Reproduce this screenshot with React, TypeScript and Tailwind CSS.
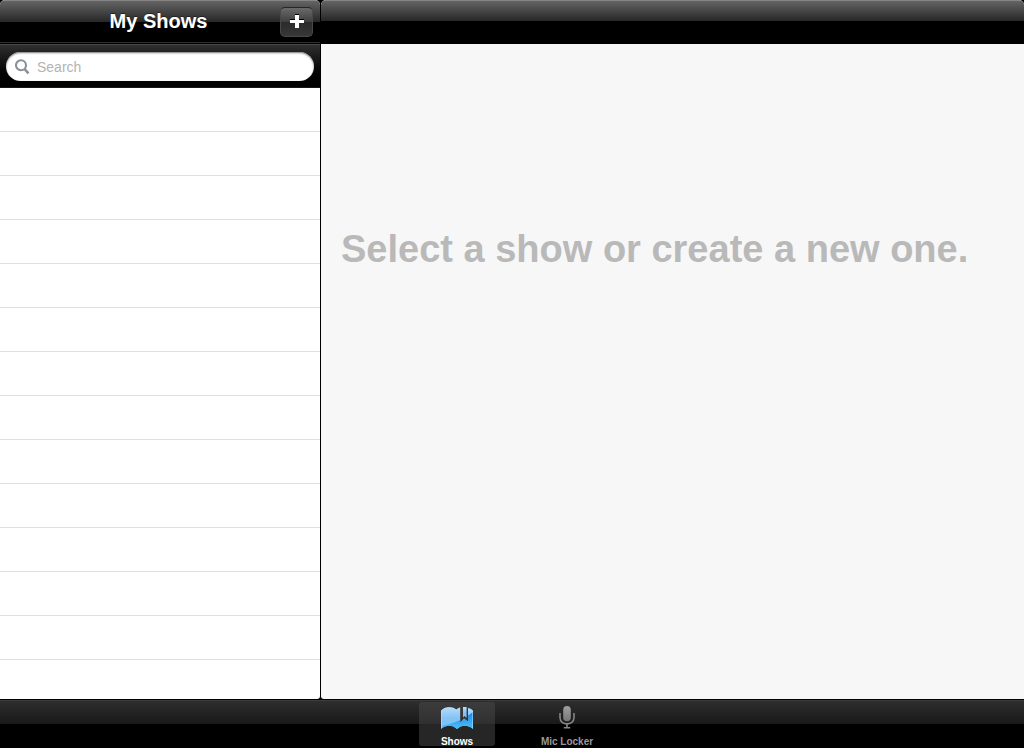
import React from "react";

const rows = Array.from({ length: 24 }, (_, i) => i);

function PlusIcon() {
  return (
    <svg width="14" height="15" viewBox="0 0 14 15" aria-hidden="true">
      <path d="M5 0h4v5h5v4H9v5H5V9H0V5h5z" fill="#000" />
      <path d="M5 1h4v5h5v3H9v5H5V9H0V6h5z" fill="#fff" />
    </svg>
  );
}

function SearchIcon() {
  return (
    <svg width="15" height="16" viewBox="0 0 15 16" fill="none" stroke="#8a9099" aria-hidden="true">
      <circle cx="6" cy="6.3" r="5" strokeWidth="2.1" />
      <path d="M9.5 10L13.5 14.4" strokeWidth="2.6" />
    </svg>
  );
}

function BookIcon() {
  return (
    <svg className="shrink-0" width="32" height="24" viewBox="0 0 32 24" aria-hidden="true">
      <defs>
        <linearGradient id="book" x1="0" y1="0" x2="0" y2="1">
          <stop offset="0" stopColor="#b9dffb" />
          <stop offset="0.5" stopColor="#86c2f6" />
          <stop offset="1" stopColor="#6cc8ff" />
        </linearGradient>
        <linearGradient id="shade" x1="0" y1="0" x2="0" y2="1">
          <stop offset="0" stopColor="#1f86e6" />
          <stop offset="1" stopColor="#4cc4fb" />
        </linearGradient>
        <clipPath id="pages">
          <path d="M0 4.5C4 0.4 11 0 15.5 3.6C16.8 2.4 17.8 1.9 19.2 1.6V17L23 12.6L27 15.6V2C28.8 2.5 30.6 3.3 32 4.7V23C27 18.4 20 18.8 16 23C12 18.8 5 18.4 0 23Z" />
        </clipPath>
      </defs>
      <g clipPath="url(#pages)">
        <rect width="32" height="24" fill="url(#book)" />
        <path d="M0 20C11 18 22 14 32 6V24H0Z" fill="url(#shade)" />
      </g>
      <path d="M0.5 22V4.6C4 0.8 11 0.4 15.5 4C16.8 2.9 17.8 2.4 19 2.2M27.2 2.3C28.8 2.8 30.4 3.5 31.6 4.8V22" fill="none" stroke="#c5e8ff" strokeWidth="0.7" opacity="0.75" />
      <path d="M22 1H25.6V12L23.6 10L22 11.6Z" fill="url(#book)" />
    </svg>
  );
}

function MicIcon() {
  return (
    <svg className="shrink-0" width="16" height="24" viewBox="0 0 16 24" aria-hidden="true">
      <defs>
        <linearGradient id="mic" x1="0" y1="0" x2="0" y2="1">
          <stop offset="0" stopColor="#a0a0a0" />
          <stop offset="1" stopColor="#777" />
        </linearGradient>
      </defs>
      <rect x="4.2" y="0" width="7.6" height="15.2" rx="3.8" fill="url(#mic)" />
      <path d="M1 7V11.5C1 20 15 20 15 11.5V7M8 18V21.5M4.8 21.7H11.2" fill="none" stroke="#858585" strokeWidth="1.6" />
    </svg>
  );
}

export default function App() {
  return (
    <div className="flex h-screen flex-col overflow-hidden bg-black font-['Liberation_Sans',Arial,sans-serif]">
      <div className="flex min-h-0 flex-1">
        <aside className="flex w-80 shrink-0 flex-col overflow-hidden rounded-t-[5px] rounded-br-[3px] bg-white">
          <header className="grid h-11 shrink-0 grid-cols-[1fr_auto_1fr] items-center border-t border-[#858585] bg-[linear-gradient(#646464_0px,#272727_21px,#000_21px,#000_41px,#2d2d2d_41px,#2d2d2d_42px,#000_42px)] pr-[7px] pb-0.5 pl-1">
            <h1 className="col-start-2 pb-0.5 text-xl font-bold leading-6 text-white [text-shadow:0_-1px_0_#222]">My Shows</h1>
            <button
              type="button"
              aria-label="Add show"
              className="flex h-[30px] w-[33px] items-center justify-center justify-self-end rounded-[5px] border border-[#484848] border-t-[#252525] bg-[linear-gradient(#6a6a6a,#3f3f3f_50%,#2b2b2b_50%,#373737)]"
            >
              <PlusIcon />
            </button>
          </header>
          <div className="h-11 shrink-0 border-t border-b border-t-[#484848] border-b-[#161616] bg-linear-to-b from-[#303030] to-black px-1.5 pt-[7px]">
            <label className="flex h-[29px] items-center gap-[7px] rounded-full bg-white pl-[9px] shadow-[inset_0_1px_2px_#777]">
              <SearchIcon />
              <input
                type="search"
                aria-label="Search"
                placeholder="Search"
                className="min-w-0 flex-1 bg-transparent pr-3 text-sm text-[#333] outline-none placeholder:text-[#b3b3b3]"
              />
            </label>
          </div>
          <ul className="min-h-0 flex-1 overflow-hidden">
            {rows.map((row) => (
              <li key={row} className="h-11 border-b border-[#e0e0e0]" />
            ))}
          </ul>
        </aside>
        <main className="ml-px flex min-w-0 flex-1 flex-col overflow-hidden rounded-t-[5px] rounded-bl-[3px] bg-[#f7f7f7]">
          <div className="h-11 shrink-0 border-t border-[#858585] bg-[linear-gradient(#646464_0px,#272727_20px,#000_20px)]" />
          <h2 className="px-5 pt-[181px] text-[38px] font-bold leading-12 text-[#b9b9b9]">
            Select a show or create a new one.
          </h2>
        </main>
      </div>
      <nav className="mt-px flex h-12 shrink-0 justify-center border-t border-[#3c3c3c] bg-[linear-gradient(#2e2e2e_0px,#191919_23px,#000_23px)]">
        <div className="flex gap-[34px] pt-px pb-0.5">
          <button type="button" aria-current="page" className="flex w-19 flex-col items-center rounded-[3px] bg-[linear-gradient(#3c3c3c,#303030_50%,#262626_50%)] pt-1 text-[10px] font-bold leading-3 text-white">
            <BookIcon />
            <span className="pt-1.5">Shows</span>
          </button>
          <button type="button" className="flex w-19 flex-col items-center pt-1 text-[10px] font-bold leading-3 text-[#999]">
            <MicIcon />
            <span className="pt-1.5">Mic Locker</span>
          </button>
        </div>
      </nav>
    </div>
  );
}
